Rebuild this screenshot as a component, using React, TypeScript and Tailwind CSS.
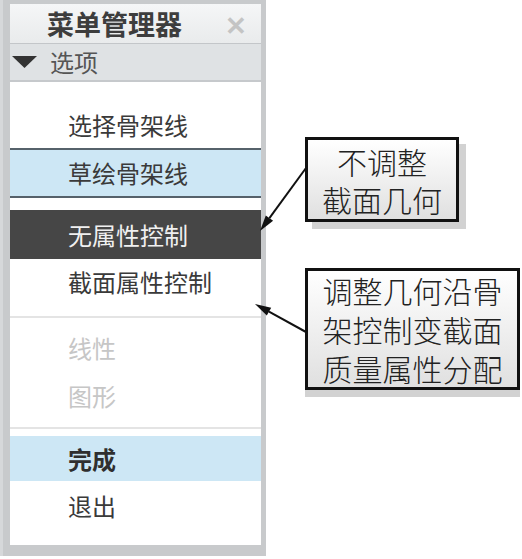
import React from "react";

const font = { fontFamily: '"Noto Sans CJK SC", "Noto Sans", sans-serif' };

function Row({ text, cls = "", h }: { text: string; cls?: string; h: string }) {
  return (
    <div className={`flex items-center pl-[58px] text-[24px] leading-none ${h} ${cls}`}>{text}</div>
  );
}

export default function App() {
  return (
    <div className="relative w-[522px] h-[559px] bg-white overflow-hidden" style={font}>
      <div className="w-[266px] h-[556px] bg-[#c8cacc] border-l-[3px] border-[#d6d8da] pl-[7px] pr-[5px] pt-[4px] pb-[11px] flex">
        <div className="flex-1 flex flex-col bg-white text-[#3a3a3a]">
          <div className="h-[40px] flex items-center justify-between pl-[37px] pr-[14px] bg-gradient-to-b from-[#f5f6f7] to-[#e9ebec] border-b border-[#c3c6c9]">
            <span className="text-[27px] font-bold leading-none text-[#3d3d3d]">菜单管理器</span>
            <span className="text-[26px] leading-none text-[#c4c4c4] font-bold">✕</span>
          </div>
          <div className="h-[38px] flex items-center bg-[#dfe2e4] border-b-2 border-[#c6c9cc] pl-[2px]">
            <svg width="26" height="14" viewBox="0 0 26 14" className="mr-[12px]">
              <polygon points="0,1 25,1 12.5,13" fill="#333" />
            </svg>
            <span className="text-[24px] leading-none text-[#555]">选项</span>
          </div>
          <div className="h-[20px]" />
          <Row text="选择骨架线" h="h-[46px]" />
          <div className="h-[50px] flex items-center pl-[58px] text-[24px] leading-none bg-[#cde7f5] border-y-2 border-[#56626b]">
            草绘骨架线
          </div>
          <div className="h-[12px]" />
          <Row text="无属性控制" h="h-[49px]" cls="bg-[#464646] text-[#f0f0f0]" />
          <Row text="截面属性控制" h="h-[46px]" />
          <div className="h-[11px]" />
          <div className="h-[2px] bg-[#e4e4e4]" />
          <div className="h-[6px]" />
          <Row text="线性" h="h-[48px]" cls="text-[#c6c6c6]" />
          <Row text="图形" h="h-[48px]" cls="text-[#c6c6c6]" />
          <div className="h-[7px]" />
          <div className="h-[2px] bg-[#e4e4e4]" />
          <div className="h-[7px]" />
          <Row text="完成" h="h-[45px]" cls="bg-[#cde7f5] font-bold text-[#2f2f2f]" />
          <Row text="退出" h="h-[49px]" />
          <div className="flex-1" />
        </div>
      </div>

      <div className="absolute left-[305px] top-[137px] w-[154px] h-[85px] border-[3px] border-[#111] bg-gradient-to-b from-white to-[#e0e0e0] shadow-[7px_7px_0_#d2d2d2] flex flex-col items-center justify-center text-[30px] font-light leading-[38px] text-[#222]">
        <div>不调整</div>
        <div>截面几何</div>
      </div>

      <div className="absolute left-[305px] top-[268px] w-[215px] h-[122px] border-[3px] border-[#111] bg-gradient-to-b from-white to-[#e0e0e0] shadow-[0_7px_0_#d2d2d2] flex flex-col items-center justify-center text-[30px] font-light leading-[39px] text-[#222]">
        <div>调整几何沿骨</div>
        <div>架控制变截面</div>
        <div>质量属性分配</div>
      </div>

      <svg className="absolute left-0 top-0" width="522" height="559" viewBox="0 0 522 559">
        <line x1="306" y1="168" x2="269.4" y2="218.1" stroke="#111" strokeWidth="2" />
        <polygon points="260,231 273.1,220.7 265.8,215.4" fill="#111" />
        <line x1="306" y1="332" x2="269" y2="311.7" stroke="#111" strokeWidth="2" />
        <polygon points="255,304 271.2,307.8 266.8,315.6" fill="#111" />
      </svg>
    </div>
  );
}
